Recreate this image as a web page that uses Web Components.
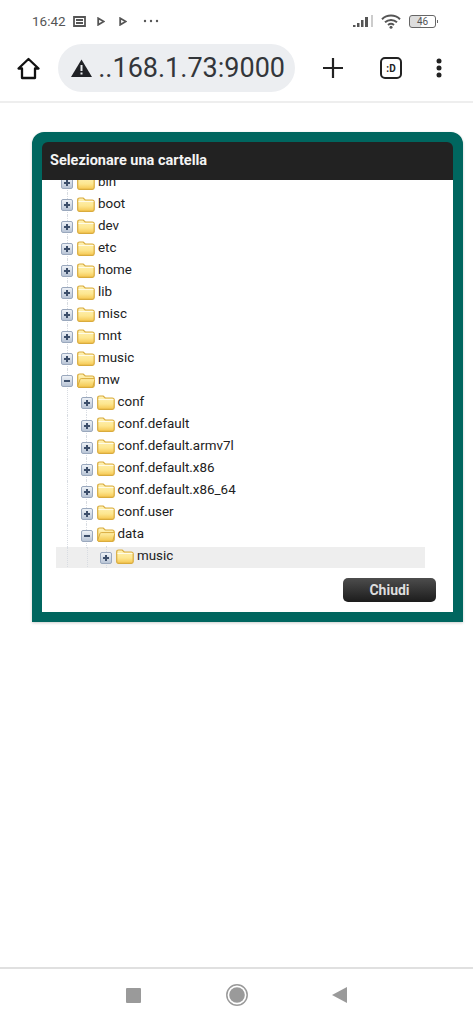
<!DOCTYPE html>
<html>
<head>
<meta charset="utf-8">
<title>Selezionare una cartella</title>
<style>
    html, body { margin: 0; padding: 0; background: #fff; }
    body { width: 473px; height: 1024px; overflow: hidden; display: flex; flex-direction: column; font-family: Roboto, sans-serif; color: #222; }
    page-area { flex: 1; }
</style>
</head>
<body>
<status-bar></status-bar>
<browser-toolbar></browser-toolbar>
<page-area>
    <folder-dialog heading="Selezionare una cartella" close-label="Chiudi">
        <tree-row level="0" label="bin"></tree-row>
        <tree-row level="0" label="boot"></tree-row>
        <tree-row level="0" label="dev"></tree-row>
        <tree-row level="0" label="etc"></tree-row>
        <tree-row level="0" label="home"></tree-row>
        <tree-row level="0" label="lib"></tree-row>
        <tree-row level="0" label="misc"></tree-row>
        <tree-row level="0" label="mnt"></tree-row>
        <tree-row level="0" label="music"></tree-row>
        <tree-row level="0" label="mw" open></tree-row>
        <tree-row level="1" label="conf"></tree-row>
        <tree-row level="1" label="conf.default"></tree-row>
        <tree-row level="1" label="conf.default.armv7l"></tree-row>
        <tree-row level="1" label="conf.default.x86"></tree-row>
        <tree-row level="1" label="conf.default.x86_64"></tree-row>
        <tree-row level="1" label="conf.user"></tree-row>
        <tree-row level="1" label="data" open></tree-row>
        <tree-row level="2" label="music" selected></tree-row>
    </folder-dialog>
</page-area>
<nav-bar></nav-bar>

<script>
//top android status bar
class StatusBar extends HTMLElement {
    constructor() {
        super();
        let shadowRoot = this.attachShadow({mode: 'open'});
        shadowRoot.innerHTML = `
            <style>
                :host { display: flex; align-items: center; height: 42px; padding: 0 0 0 32px; color: #555; font: 13.5px Roboto, sans-serif; }
                .left { display: flex; align-items: center; gap: 7px; }
                .right { display: flex; align-items: center; margin-left: auto; margin-right: 37px; gap: 7px; }
                svg { display: block; }
                .battery { position: relative; width: 25px; height: 11px; margin-left: 1px; border: 1px solid #666; border-radius: 3px; box-sizing: content-box; font-size: 10px; line-height: 11px; text-align: center; color: #555; background: linear-gradient(90deg, #ddd 46%, #fff 46%); }
                .battery::after { content: ""; position: absolute; right: -3px; top: 4px; width: 1.5px; height: 3px; background: #666; }
            </style>
            <div class="left">
                <span>16:42</span>
                <svg width="13" height="11" viewBox="0 0 13 11"><path d="M1 1h11v9H1zM3 4h7M3 7h7" fill="none" stroke="#555" stroke-width="1.800"/></svg>
                <svg style="margin-left:4px" width="8" height="9" viewBox="0 0 8 9"><path d="M1.2 1.2 6.8 4.5 1.2 7.8z" fill="none" stroke="#555" stroke-width="1.800"/></svg>
                <svg style="margin-left:7px" width="8" height="9" viewBox="0 0 8 9"><path d="M1.2 1.2 6.8 4.5 1.2 7.8z" fill="none" stroke="#555" stroke-width="1.800"/></svg>
                <svg style="margin-left:9px" width="16" height="4" viewBox="0 0 16 4"><g fill="#555"><circle cx="2" cy="2" r="1.200"/><circle cx="8" cy="2" r="1.200"/><circle cx="14" cy="2" r="1.200"/></g></svg>
            </div>
            <div class="right">
                <svg width="21" height="14" viewBox="0 0 21 14"><path d="M0 11h2.500v2H0zM4 9h2.500v4H4zM8 6h2.500v7H8zM12 3h3v10h-3z" fill="#555"/><path d="M18 1h2v12h-2z" fill="#ccc"/></svg>
                <svg width="20" height="15" viewBox="0 0 20 15"><g fill="none" stroke="#555" stroke-width="2"><path d="M1 5.200c5-4.800 13-4.800 18 0"/><path d="M4 8.200c3.400-3 8.600-3 12 0"/><path d="M7 11c1.800-1.400 4.200-1.400 6 0"/></g><circle cx="10" cy="13.300" r="1.500" fill="#555"/></svg>
                <div class="battery">46</div>
            </div>
        `;
    }
}
customElements.define('status-bar', StatusBar);

//chrome toolbar with the address pill
class BrowserToolbar extends HTMLElement {
    constructor() {
        super();
        let shadowRoot = this.attachShadow({mode: 'open'});
        shadowRoot.innerHTML = `
            <style>
                :host { display: flex; align-items: center; height: 52px; border-bottom: 2px solid #eeeeee; padding: 0 0 7px 17px; box-sizing: content-box; }
                svg { display: block; flex: none; }
                .pill { display: flex; align-items: center; width: 237px; height: 48px; margin-left: 18px; border-radius: 24px; background: #eceef1; overflow: hidden; flex: none; box-sizing: border-box; padding-left: 13px; }
                .url { flex: 1; min-width: 0; text-align: right; white-space: nowrap; font: 27px Roboto, sans-serif; color: #33363a; padding-right: 10px; }
                .tabs { display: flex; align-items: center; justify-content: center; width: 22px; height: 22px; margin-left: 37px; border: 2.500px solid #222; border-radius: 5px; box-sizing: border-box; font: bold 10px Roboto, sans-serif; color: #222; }
            </style>
            <svg width="23" height="23" viewBox="0 0 23 23"><path d="M11.500 2 21.500 11.500H18V21H5V11.500H1.500z" fill="none" stroke="#111" stroke-width="2.300" stroke-linejoin="round"/></svg>
            <div class="pill">
                <svg width="21" height="18" viewBox="0 0 21 18"><path d="M10.500.5 21 18H0z" fill="#202226"/><path d="M9.500 6h2v6h-2zM9.500 13.500h2v2h-2z" fill="#eceef1"/></svg>
                <div class="url">..168.1.73:9000</div>
            </div>
            <svg style="margin-left:28px" width="20" height="20" viewBox="0 0 20 20"><path d="M10 0v20M0 10h20" stroke="#222" stroke-width="2.200"/></svg>
            <div class="tabs">:D</div>
            <svg style="margin-left:34px" width="6" height="20" viewBox="0 0 6 20"><g fill="#222"><circle cx="3" cy="3" r="2.500"/><circle cx="3" cy="10" r="2.500"/><circle cx="3" cy="17" r="2.500"/></g></svg>
        `;
    }
}
customElements.define('browser-toolbar', BrowserToolbar);

//modal with teal border, dark title, scrolled tree and close button
class FolderDialog extends HTMLElement {
    constructor() {
        super();
        let shadowRoot = this.attachShadow({mode: 'open'});
        shadowRoot.innerHTML = `
            <style>
                :host { display: flex; flex-direction: column; width: 431px; height: 490px; margin: 29px 0 0 32px; box-sizing: border-box; border: 10px solid #00665f; border-radius: 12px 12px 0 0; background: #00665f; box-shadow: 0 1px 3px rgba(0,0,0,.2); font-family: Roboto, sans-serif; }
                .title { height: 38px; flex: none; background: #222; border-radius: 6px 6px 0 0; color: #f4f4f4; font: bold 14.500px/37px Roboto, sans-serif; padding-left: 8px; }
                .body { flex: 1; display: flex; flex-direction: column; background: #fff; }
                .tree { height: 388px; flex: none; margin: 0 28px 0 14px; overflow: hidden; }
                .inner { margin-top: -8px; }
                .foot { flex: 1; display: flex; align-items: flex-start; justify-content: flex-end; padding: 10px 17px 0 0; }
                button { width: 93px; height: 24px; border: 0; border-radius: 5px; padding: 0; background: linear-gradient(#4d4d4d, #1c1c1c); color: #ddd; font: bold 14px Roboto, sans-serif; }
            </style>
            <div class="title"></div>
            <div class="body">
                <div class="tree"><div class="inner"><slot></slot></div></div>
                <div class="foot"><button></button></div>
            </div>
        `;
    }

    connectedCallback() {
        this.shadowRoot.querySelector('.title').textContent = this.getAttribute('heading');
        this.shadowRoot.querySelector('button').textContent = this.getAttribute('close-label');
    }
}
customElements.define('folder-dialog', FolderDialog);

//one row of the folder tree
class TreeRow extends HTMLElement {
    constructor() {
        super();
        let shadowRoot = this.attachShadow({mode: 'open'});
        shadowRoot.innerHTML = `
            <style>
                :host { display: flex; align-items: center; height: 22.060px; font: 13.400px Roboto, sans-serif; color: #222; }
                :host([selected]) { background: #eeeeee; }
                .guides { display: flex; flex: none; align-self: stretch; }
                .guides i { width: 19.500px; border-left: 1px dotted #d8dce2; box-sizing: border-box; margin-left: 11px; margin-right: -11px; }
                .mark { position: relative; flex: none; width: 12px; height: 12px; margin-left: 5px; }
                .stem { position: absolute; left: 5.500px; top: -6px; height: 24px; border-left: 1px dotted #d8dce2; }
                .box { position: absolute; inset: 0; box-sizing: border-box; border: 1px solid #9aa8bd; border-radius: 2px; background: linear-gradient(#eef2f7, #b9c5d6); }
                .box::before { content: ""; position: absolute; left: 2px; top: 4px; width: 6px; height: 2px; background: #3d4f6b; }
                .box.closed::after { content: ""; position: absolute; left: 4px; top: 2px; width: 2px; height: 6px; background: #3d4f6b; }
                svg { display: block; flex: none; margin-left: 4px; margin-right: 3px; position: relative; top: -1px; }
                .label { white-space: nowrap; position: relative; top: -2px; }
            </style>
            <div class="guides"></div>
            <div class="mark"><div class="stem"></div><div class="box"></div></div>
            <svg width="18" height="15" viewBox="0 0 18 15"></svg>
            <span class="label"></span>
        `;
    }

    connectedCallback() {
        let level = parseInt(this.getAttribute('level'), 10);
        let guides = this.shadowRoot.querySelector('.guides');
        for (let i = 0; i < level; i++) {
            guides.appendChild(document.createElement('i'));
        }
        let open = this.hasAttribute('open');
        this.shadowRoot.querySelector('.box').classList.toggle('closed', !open);
        this.shadowRoot.querySelector('.label').textContent = this.getAttribute('label');
        let back = '<path d="M.7 3c0-1.300.8-2 2-2h3.500l2 2h7c1.300 0 2 .7 2 2v7.500c0 1.100-.7 1.800-1.800 1.800H2.500c-1.100 0-1.800-.7-1.800-1.800z" fill="url(#f)" stroke="#d9ab3d" stroke-width="1.200"/>';
        let front = open
            ? '<path d="M.8 13 3 6.500c.2-.6.6-.9 1.200-.9h13c.6 0 .8.400.6 1L16 13.300c-.2.6-.6 1-1.200 1H2c-.9 0-1.400-.5-1.200-1.300z" fill="url(#o)" stroke="#d9ab3d"/>'
            : '<path d="M1.500 4.500h15" stroke="#fffbe6" fill="none"/>';
        this.shadowRoot.querySelector('svg').innerHTML =
            '<defs><linearGradient id="f" x1="0" y1="0" x2="0" y2="1"><stop offset="0" stop-color="#fff3b8"/><stop offset=".6" stop-color="#fde68f"/><stop offset="1" stop-color="#f5c64f"/></linearGradient>' +
            '<linearGradient id="o" x1="0" y1="0" x2="0" y2="1"><stop offset="0" stop-color="#fff0a8"/><stop offset="1" stop-color="#f3c64c"/></linearGradient></defs>' + back + front;
    }
}
customElements.define('tree-row', TreeRow);

//android soft keys at the bottom
class NavBar extends HTMLElement {
    constructor() {
        super();
        let shadowRoot = this.attachShadow({mode: 'open'});
        shadowRoot.innerHTML = `
            <style>
                :host { display: flex; align-items: center; justify-content: center; gap: 84.500px; height: 57px; flex: none; border-top: 2px solid #e0e0e0; box-sizing: border-box; padding-bottom: 3px; }
                svg { display: block; }
            </style>
            <svg width="15" height="15" viewBox="0 0 15 15"><rect width="15" height="15" rx="1" fill="#9a9a9a"/></svg>
            <svg width="22" height="22" viewBox="0 0 22 22"><circle cx="11" cy="11" r="10.200" fill="none" stroke="#9a9a9a" stroke-width="1.500"/><circle cx="11" cy="11" r="7.800" fill="#9a9a9a"/></svg>
            <svg width="15" height="16" viewBox="0 0 15 16"><path d="M15 0v16L0 8z" fill="#9a9a9a"/></svg>
        `;
    }
}
customElements.define('nav-bar', NavBar);
</script>
</body>
</html>
